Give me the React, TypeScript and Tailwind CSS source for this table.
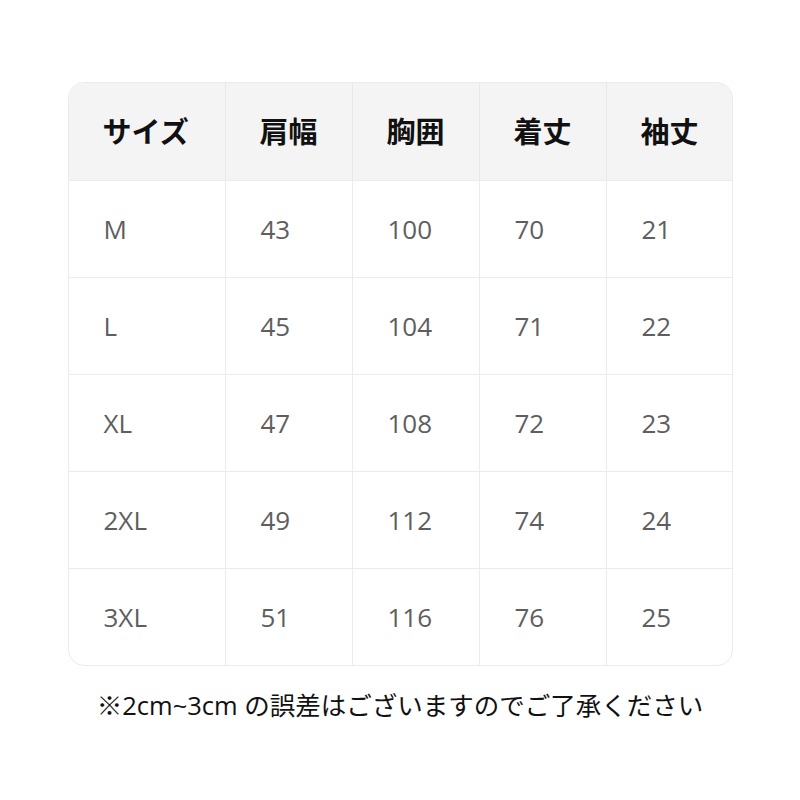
const headers = ["サイズ", "肩幅", "胸囲", "着丈", "袖丈"];

const rows = [
  ["M", "43", "100", "70", "21"],
  ["L", "45", "104", "71", "22"],
  ["XL", "47", "108", "72", "23"],
  ["2XL", "49", "112", "74", "24"],
  ["3XL", "51", "116", "76", "25"],
];

const font = { fontFamily: '"Open Sans", "Noto Sans CJK JP", sans-serif' };

export default function App() {
  return (
    <div className="w-[800px] h-[800px] bg-white flex flex-col items-center pt-[82px]" style={font}>
      <div className="w-[665px] rounded-[16px] border border-[#ebebeb] overflow-hidden">
        <div className="grid grid-cols-[157px_127px_127px_127px_126px] bg-[#f4f4f4] h-[97px]">
          {headers.map((h, i) => (
            <div
              key={h}
              className={`flex items-center pl-[34px] text-[29px] font-bold text-[#111] ${i < 4 ? "border-r border-[#e8e8e8]" : ""}`}
            >
              {h}
            </div>
          ))}
        </div>
        {rows.map((r) => (
          <div key={r[0]} className="grid grid-cols-[157px_127px_127px_127px_126px] h-[97px] border-t border-[#ebebeb]">
            {r.map((c, i) => (
              <div
                key={i}
                className={`flex items-center pl-[35px] text-[26px] text-[#5e5e5e] ${i < 4 ? "border-r border-[#ebebeb]" : ""}`}
              >
                {c}
              </div>
            ))}
          </div>
        ))}
      </div>
      <p className="mt-[20px] text-[25.5px] text-[#111]">※2cm~3cm の誤差はございますのでご了承ください</p>
    </div>
  );
}
